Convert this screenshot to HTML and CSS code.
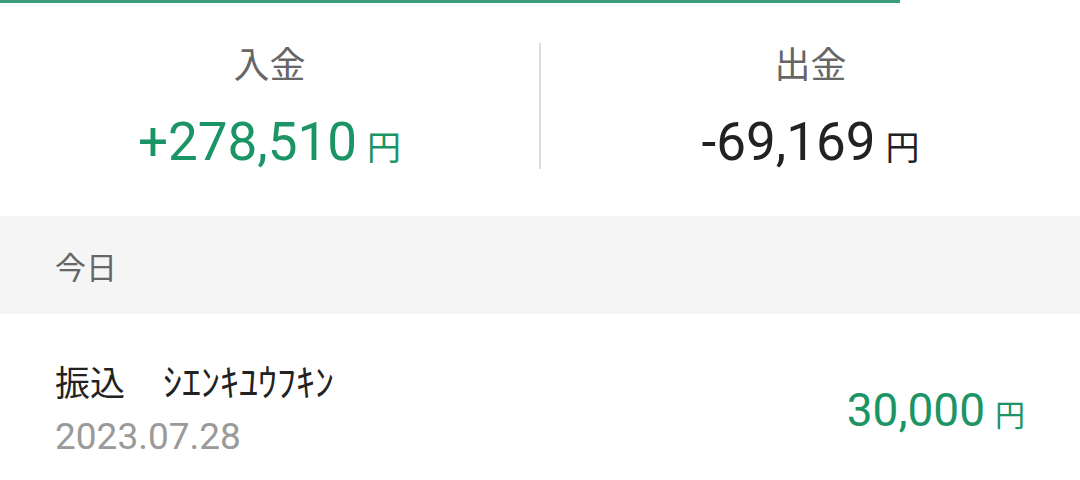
FILE: index.html
```html
<!DOCTYPE html>
<html lang="ja">
  <head>
    <meta charset="UTF-8" />
    <meta name="viewport" content="width=device-width, initial-scale=1.0" />
    <title>入出金明細</title>
    <link rel="stylesheet" href="styles.css">
  </head>
  <body>
    <div class="progress"></div>

    <div class="summary">
      <div class="summary-col">
        <div class="summary-label">入金</div>
        <div class="summary-amount plus">+278,510<span class="yen">円</span></div>
      </div>
      <div class="summary-divider"></div>
      <div class="summary-col">
        <div class="summary-label">出金</div>
        <div class="summary-amount">-69,169<span class="yen">円</span></div>
      </div>
    </div>

    <div class="day-header">今日</div>

    <div class="entry">
      <div class="entry-info">
        <div class="entry-title">振込<span class="entry-name">ｼｴﾝｷﾕｳﾌｷﾝ</span></div>
        <div class="entry-date">2023.07.28</div>
      </div>
      <div class="entry-amount">30,000<span class="yen small">円</span></div>
    </div>
  </body>
</html>
```

FILE: styles.css
```css
body {
  margin: 0;
  background-color: #fff;
  font-family: Roboto, "Noto Sans CJK JP", sans-serif;
  color: #222;
}
.progress {
  width: 900px;
  height: 3px;
  background-color: #3a9f78;
}
.summary {
  display: flex;
  height: 213px;
}
.summary-col {
  flex: 1;
  text-align: center;
  padding-top: 38px;
}
.summary-label {
  font-size: 36px;
  line-height: 50px;
  color: #666;
}
.summary-amount {
  margin-top: 21px;
  font-size: 53px;
  line-height: 60px;
  color: #222;
}
.summary-amount.plus {
  color: #1b9466;
}
.yen {
  font-size: 34px;
  line-height: 1;
  margin-left: 10px;
}
.yen.small {
  font-size: 30px;
  margin-left: 10px;
}
.summary-divider {
  width: 2px;
  height: 126px;
  margin-top: 40px;
  background-color: #dcdcdc;
}
.day-header {
  height: 98px;
  padding-left: 55px;
  display: flex;
  align-items: center;
  background-color: #f5f5f5;
  font-size: 31px;
  color: #666;
}
.entry {
  display: flex;
  align-items: center;
  justify-content: space-between;
  padding: 46px 55px 0 55px;
}
.entry-title {
  font-size: 35px;
  line-height: 46px;
  color: #222;
}
.entry-name {
  margin-left: 38px;
  font-size: 38px;
}
.entry-date {
  margin-top: 6px;
  font-size: 37px;
  line-height: 46px;
  color: #9a9a9a;
}
.entry-amount {
  font-size: 46px;
  color: #1b9466;
}
```
